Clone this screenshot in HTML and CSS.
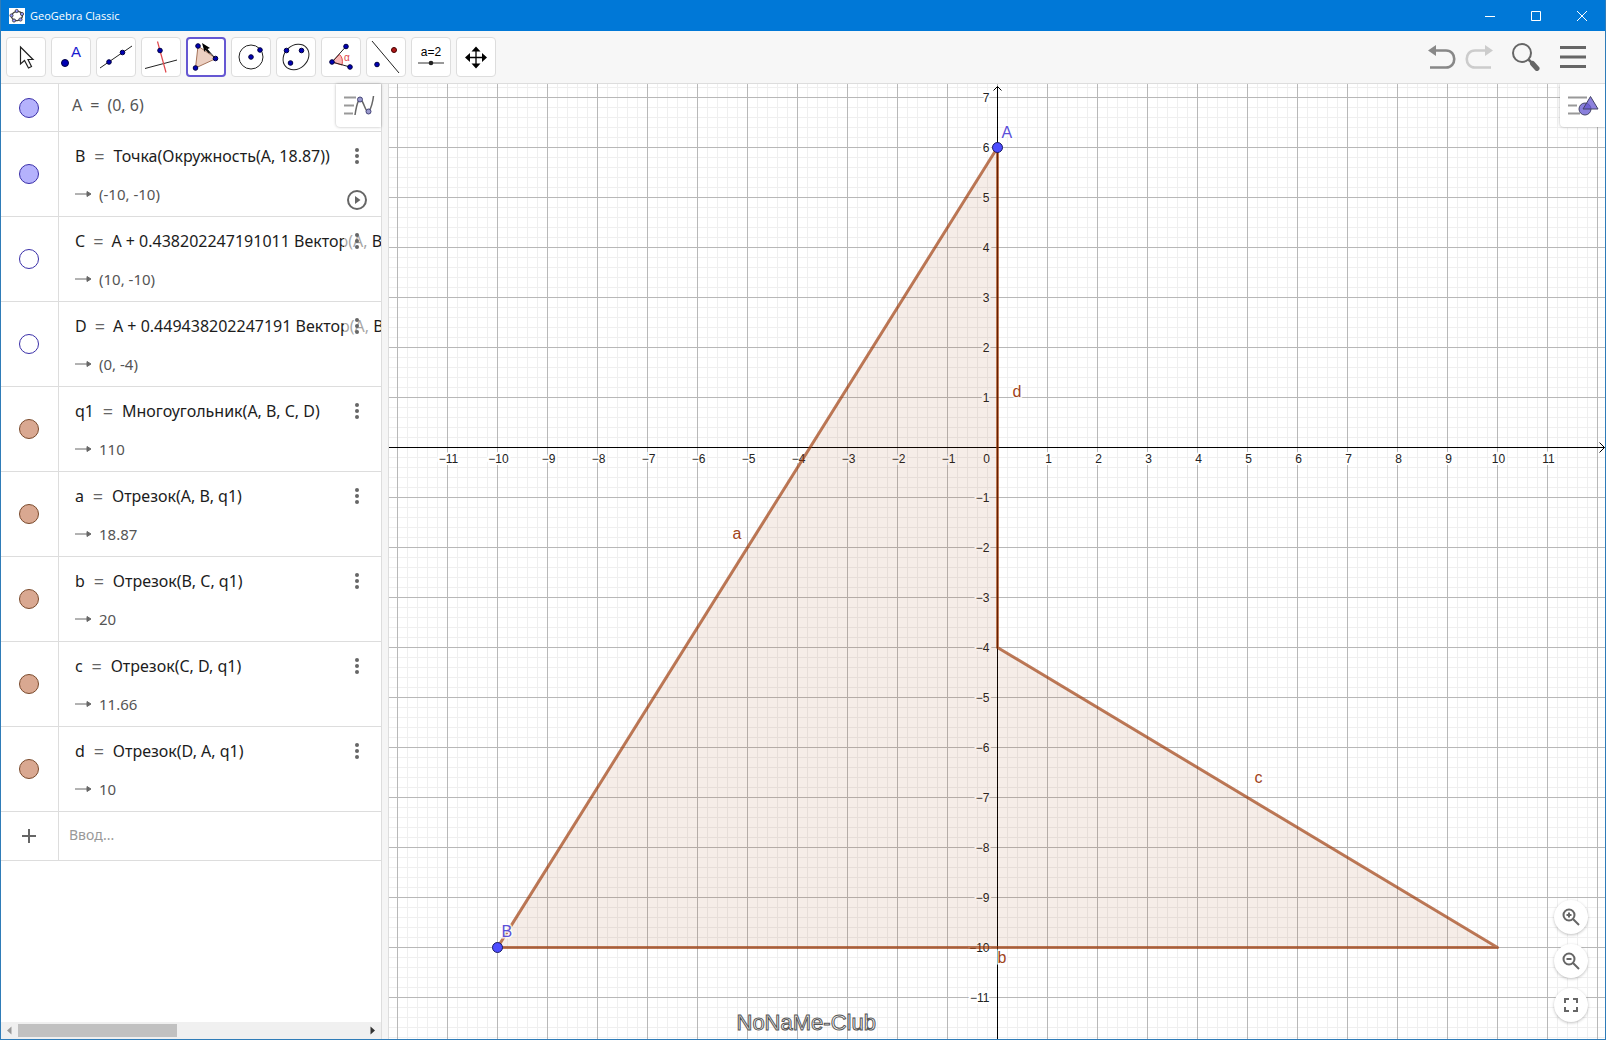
FILE: index.html
```html
<!DOCTYPE html>
<html lang="ru">
<head>
<meta charset="utf-8">
<title>GeoGebra Classic</title>
<link rel="stylesheet" href="styles.css">
</head>
<body>
<div class="window">
  <header class="titlebar">
    <svg class="logo" width="16" height="16" viewBox="0 0 16 16" aria-hidden="true"><rect width="16" height="16" fill="#fff"/><ellipse cx="8" cy="8" rx="5.5" ry="4.6" transform="rotate(-15 8 8)" fill="none" stroke="#444" stroke-width="1.3"/><g fill="#99f" stroke="#333" stroke-width=".8"><circle cx="7.700" cy="3" r="1.600"/><circle cx="13" cy="6" r="1.600"/><circle cx="11.500" cy="11.500" r="1.600"/><circle cx="5" cy="12.500" r="1.600"/><circle cx="2.500" cy="7.500" r="1.600"/></g></svg>
    <span class="title">GeoGebra Classic</span>
    <button class="winbtn" aria-label="Свернуть"><svg width="12" height="12" viewBox="0 0 12 12"><path d="M1 6.500H11"/></svg></button>
    <button class="winbtn" aria-label="Развернуть"><svg width="12" height="12" viewBox="0 0 12 12"><path d="M1.500 1.500H10.500V10.500H1.500Z"/></svg></button>
    <button class="winbtn" aria-label="Закрыть"><svg width="12" height="12" viewBox="0 0 12 12"><path d="M1 1L11 11M11 1L1 11"/></svg></button>
  </header>

  <nav class="toolbar">
    <button class="tool" aria-label="Перемещать"><svg viewBox="0 0 40 40"><path d="M14.500 10V27L18.500 23.500L22.500 31L25.500 29.500L22 22.500H27Z" fill="#fff" stroke="#222" stroke-width="1.200"/></svg></button>
    <button class="tool" aria-label="Точка"><svg viewBox="0 0 40 40"><circle class="pt" cx="14" cy="26" r="3.500"/><text x="20" y="20" class="toolA">A</text></svg></button>
    <button class="tool" aria-label="Прямая"><svg viewBox="0 0 40 40"><path d="M4 31L36 9" class="ln"/><circle class="pt" cx="13" cy="25" r="2.300"/><circle class="pt" cx="26.500" cy="15.500" r="2.300"/></svg></button>
    <button class="tool" aria-label="Перпендикуляр"><svg viewBox="0 0 40 40"><path d="M4 31.500L36 23" class="ln"/><path d="M16.500 4.500L25 35.500" stroke="#e0474c" fill="none" stroke-width="1.200"/><circle class="pt" cx="19" cy="13.500" r="2.300"/></svg></button>
    <button class="tool active" aria-label="Многоугольник"><svg viewBox="0 0 40 40"><path d="M12 9L30 21.500L9.500 31Z" fill="#ecd0c2" stroke="#a5735a"/><circle class="pt" cx="12" cy="9" r="2.300"/><circle class="pt" cx="29.500" cy="21.500" r="2.300"/><circle class="pt" cx="9.500" cy="31" r="2.300"/><path d="M16 6L24 11L21.500 12L25 17L22.500 16L19.500 13L18.500 15Z" fill="#000"/><path d="M20 11L29 21" stroke="#222"/></svg></button>
    <button class="tool" aria-label="Окружность"><svg viewBox="0 0 40 40"><circle cx="20" cy="20" r="12" class="ln"/><circle class="pt" cx="20" cy="20" r="2.300"/><circle class="pt" cx="29" cy="13" r="2.300"/></svg></button>
    <button class="tool" aria-label="Эллипс"><svg viewBox="0 0 40 40"><ellipse cx="20" cy="20" rx="14" ry="11.500" transform="rotate(-42 20 20)" class="ln"/><circle class="pt" cx="10.500" cy="13.500" r="2.300"/><circle class="pt" cx="25.500" cy="13.500" r="2.300"/><circle class="pt" cx="14.500" cy="26" r="2.300"/></svg></button>
    <button class="tool" aria-label="Угол"><svg viewBox="0 0 40 40"><path d="M11 25L18.500 17.500Q22.500 21 21 28Z" fill="#f9b9b9" stroke="#e0474c"/><path d="M25 9.500L11 25L29 30" class="ln"/><text x="23" y="24" class="alpha">α</text><circle class="pt" cx="25" cy="9.500" r="2.300"/><circle class="pt" cx="11" cy="25" r="2.300"/><circle class="pt" cx="29" cy="30" r="2.300"/></svg></button>
    <button class="tool" aria-label="Отражение"><svg viewBox="0 0 40 40"><path d="M6 4L33 36" class="ln"/><circle class="pt" cx="11" cy="27.500" r="2.300"/><circle cx="28" cy="13" r="2.500" fill="#b01818" stroke="#400"/></svg></button>
    <button class="tool" aria-label="Ползунок"><svg viewBox="0 0 40 40"><text x="20" y="19" class="slidertext">a=2</text><path d="M7 26H33" stroke="#777" stroke-width="1.500"/><circle cx="20" cy="26" r="2.300" fill="#222"/></svg></button>
    <button class="tool" aria-label="Переместить чертёж"><svg viewBox="0 0 40 40"><path d="M20 13V28M13 20.500H28" stroke="#000" stroke-width="1.300"/><path d="M20 9.500L24.500 14.500H15.500ZM20 31.500L24.500 26.500H15.500ZM9 20.500L14 16V25ZM31 20.500L26 16V25Z"/></svg></button>
    <div class="actions">
      <button class="action" aria-label="Отменить"><svg width="28" height="28" viewBox="0 0 28 28"><path d="M7 7.500H18C29 7.500 29 24.500 18 24.500H2" fill="none" stroke="#888" stroke-width="2.600"/><path d="M0 7.500L8 2V13Z" fill="#888"/></svg></button>
      <button class="action redo" aria-label="Повторить"><svg width="28" height="28" viewBox="0 0 28 28"><path d="M21 7.500H10C-1 7.500 -1 24.500 10 24.500H26" fill="none" stroke="#ccc" stroke-width="2.600"/><path d="M28 7.500L20 2V13Z" fill="#ccc"/></svg></button>
      <button class="action find" aria-label="Поиск"><svg width="28" height="28" viewBox="0 0 28 28"><circle cx="10" cy="10" r="9" fill="none" stroke="#666" stroke-width="2"/><path d="M16.500 16.500L20 20" stroke="#666" stroke-width="2.500"/><path d="M20.500 20.500L25 25.500" stroke="#666" stroke-width="5" stroke-linecap="round"/></svg></button>
      <button class="action menu" aria-label="Меню"><svg width="28" height="28" viewBox="0 0 28 28"><path d="M1 4.500H27M1 14H27M1 23.500H27" stroke="#666" stroke-width="3"/></svg></button>
    </div>
  </nav>

  <main class="workspace">
    <section class="algebra">
      <button class="stylebar" aria-label="Панель стилей"><svg width="32" height="24" viewBox="0 0 32 24"><path d="M1 3.500H13M1 11.500H11M1 19.500H10" stroke="#999" stroke-width="2"/><path d="M12 21C14 8 16 3 19 7C22 12 23 19 26 17C28 15 30 7 30.500 2" fill="none" stroke="#666" stroke-width="1.500"/><g fill="#99c" stroke="#447" stroke-width="1"><circle cx="17" cy="5.500" r="2.500"/><circle cx="25.500" cy="17.500" r="2.500"/></g></svg></button>
      <ul class="rows">
        <li class="row first"><div class="marker"><button class="dot blue" aria-label="A"></button></div><div class="body"><div class="formula plain"><span>A</span><span>=</span><span>(0, 6)</span></div></div></li>
        <li class="row"><div class="marker"><button class="dot blue" aria-label="B"></button></div><div class="body"><div class="formula"><span>B</span><i>=</i><span>Точка(Окружность(A, 18.87))</span></div><div class="value"><svg class="arrow" viewBox="0 0 16 8"><path d="M0 4H14" /><path d="M12 1.500L16 4L12 6.500Z"/></svg><span>(-10, -10)</span></div></div><button class="more" aria-label="Ещё"><svg width="4" height="18" viewBox="0 0 4 18"><circle cx="2" cy="3" r="2"/><circle cx="2" cy="9" r="2"/><circle cx="2" cy="15" r="2"/></svg></button><button class="play" aria-label="Анимация"><svg width="22" height="22" viewBox="0 0 22 22"><circle cx="11" cy="11" r="9" fill="none" stroke="#666" stroke-width="2"/><path d="M9 7L14.500 11L9 15Z" fill="#666"/></svg></button></li>
        <li class="row"><div class="marker"><button class="dot hollow" aria-label="C"></button></div><div class="body"><div class="formula"><span>C</span><i>=</i><span>A + 0.438202247191011 Вектор(A, B)</span></div><div class="value"><svg class="arrow" viewBox="0 0 16 8"><path d="M0 4H14"/><path d="M12 1.500L16 4L12 6.500Z"/></svg><span>(10, -10)</span></div></div><button class="more" aria-label="Ещё"><svg width="4" height="18" viewBox="0 0 4 18"><circle cx="2" cy="3" r="2"/><circle cx="2" cy="9" r="2"/><circle cx="2" cy="15" r="2"/></svg></button></li>
        <li class="row"><div class="marker"><button class="dot hollow" aria-label="D"></button></div><div class="body"><div class="formula"><span>D</span><i>=</i><span>A + 0.449438202247191 Вектор(A, B)</span></div><div class="value"><svg class="arrow" viewBox="0 0 16 8"><path d="M0 4H14"/><path d="M12 1.500L16 4L12 6.500Z"/></svg><span>(0, -4)</span></div></div><button class="more" aria-label="Ещё"><svg width="4" height="18" viewBox="0 0 4 18"><circle cx="2" cy="3" r="2"/><circle cx="2" cy="9" r="2"/><circle cx="2" cy="15" r="2"/></svg></button></li>
        <li class="row"><div class="marker"><button class="dot brown" aria-label="q1"></button></div><div class="body"><div class="formula"><span>q1</span><i>=</i><span>Многоугольник(A, B, C, D)</span></div><div class="value"><svg class="arrow" viewBox="0 0 16 8"><path d="M0 4H14"/><path d="M12 1.500L16 4L12 6.500Z"/></svg><span>110</span></div></div><button class="more" aria-label="Ещё"><svg width="4" height="18" viewBox="0 0 4 18"><circle cx="2" cy="3" r="2"/><circle cx="2" cy="9" r="2"/><circle cx="2" cy="15" r="2"/></svg></button></li>
        <li class="row"><div class="marker"><button class="dot brown" aria-label="a"></button></div><div class="body"><div class="formula"><span>a</span><i>=</i><span>Отрезок(A, B, q1)</span></div><div class="value"><svg class="arrow" viewBox="0 0 16 8"><path d="M0 4H14"/><path d="M12 1.500L16 4L12 6.500Z"/></svg><span>18.87</span></div></div><button class="more" aria-label="Ещё"><svg width="4" height="18" viewBox="0 0 4 18"><circle cx="2" cy="3" r="2"/><circle cx="2" cy="9" r="2"/><circle cx="2" cy="15" r="2"/></svg></button></li>
        <li class="row"><div class="marker"><button class="dot brown" aria-label="b"></button></div><div class="body"><div class="formula"><span>b</span><i>=</i><span>Отрезок(B, C, q1)</span></div><div class="value"><svg class="arrow" viewBox="0 0 16 8"><path d="M0 4H14"/><path d="M12 1.500L16 4L12 6.500Z"/></svg><span>20</span></div></div><button class="more" aria-label="Ещё"><svg width="4" height="18" viewBox="0 0 4 18"><circle cx="2" cy="3" r="2"/><circle cx="2" cy="9" r="2"/><circle cx="2" cy="15" r="2"/></svg></button></li>
        <li class="row"><div class="marker"><button class="dot brown" aria-label="c"></button></div><div class="body"><div class="formula"><span>c</span><i>=</i><span>Отрезок(C, D, q1)</span></div><div class="value"><svg class="arrow" viewBox="0 0 16 8"><path d="M0 4H14"/><path d="M12 1.500L16 4L12 6.500Z"/></svg><span>11.66</span></div></div><button class="more" aria-label="Ещё"><svg width="4" height="18" viewBox="0 0 4 18"><circle cx="2" cy="3" r="2"/><circle cx="2" cy="9" r="2"/><circle cx="2" cy="15" r="2"/></svg></button></li>
        <li class="row"><div class="marker"><button class="dot brown" aria-label="d"></button></div><div class="body"><div class="formula"><span>d</span><i>=</i><span>Отрезок(D, A, q1)</span></div><div class="value"><svg class="arrow" viewBox="0 0 16 8"><path d="M0 4H14"/><path d="M12 1.500L16 4L12 6.500Z"/></svg><span>10</span></div></div><button class="more" aria-label="Ещё"><svg width="4" height="18" viewBox="0 0 4 18"><circle cx="2" cy="3" r="2"/><circle cx="2" cy="9" r="2"/><circle cx="2" cy="15" r="2"/></svg></button></li>
        <li class="row entry"><div class="marker"><button class="plus" aria-label="Добавить"><svg width="14" height="14" viewBox="0 0 14 14"><path d="M7 0V14M0 7H14" stroke="#666" stroke-width="2"/></svg></button></div><input class="entryfield" type="text" placeholder="Ввод..." aria-label="Ввод"></li>
      </ul>
      <div class="scrollbar"><svg width="17" height="17" viewBox="0 0 17 17"><path d="M6 8.500L10.500 4.500V12.500Z" fill="#999"/></svg><div class="track"><div class="thumb"></div></div><svg width="17" height="17" viewBox="0 0 17 17"><path d="M11 8.500L6.500 4.500V12.500Z" fill="#333"/></svg></div>
    </section>
    <div class="divider"></div>
    <section class="graphics">
      <svg class="plot" viewBox="-608.5 -363.5 1216 955" preserveAspectRatio="xMidYMin slice" role="img" aria-label="Полотно">
        <defs>
          <pattern id="minor" x="-0.5" y="-0.5" width="10" height="10" patternUnits="userSpaceOnUse"><path d="M.5 0V10M0 .5H10" stroke="#efefef" fill="none"/></pattern>
          <pattern id="major" x="-0.5" y="-0.5" width="50" height="50" patternUnits="userSpaceOnUse"><path d="M.5 0V50M0 .5H50" stroke="#b8b8b8" fill="none"/></pattern>
        </defs>
        <rect x="-609" y="-364" width="1218" height="957" fill="url(#minor)"/>
        <rect x="-609" y="-364" width="1218" height="957" fill="url(#major)"/>
        <path class="axis" d="M-609 0H607M602 -5L607 0L602 5M0 593V-361M-4 -357L0 -361L4 -357"/>
        <g class="num xnum">
          <text x="-549" y="15">−11</text><text x="-499" y="15">−10</text><text x="-449" y="15">−9</text><text x="-399" y="15">−8</text><text x="-349" y="15">−7</text><text x="-299" y="15">−6</text><text x="-249" y="15">−5</text><text x="-199" y="15">−4</text><text x="-149" y="15">−3</text><text x="-99" y="15">−2</text><text x="-49" y="15">−1</text><text x="-11" y="15">0</text><text x="51" y="15">1</text><text x="101" y="15">2</text><text x="151" y="15">3</text><text x="201" y="15">4</text><text x="251" y="15">5</text><text x="301" y="15">6</text><text x="351" y="15">7</text><text x="401" y="15">8</text><text x="451" y="15">9</text><text x="501" y="15">10</text><text x="551" y="15">11</text>
        </g>
        <g class="num ynum">
          <text x="-8" y="-346">7</text><text x="-8" y="-296">6</text><text x="-8" y="-246">5</text><text x="-8" y="-196">4</text><text x="-8" y="-146">3</text><text x="-8" y="-96">2</text><text x="-8" y="-46">1</text><text x="-8" y="54">−1</text><text x="-8" y="104">−2</text><text x="-8" y="154">−3</text><text x="-8" y="204">−4</text><text x="-8" y="254">−5</text><text x="-8" y="304">−6</text><text x="-8" y="354">−7</text><text x="-8" y="404">−8</text><text x="-8" y="454">−9</text><text x="-8" y="504">−10</text><text x="-8" y="554">−11</text>
        </g>
        <path class="poly" d="M0 -300L-500 500H500L0 200Z"/>
        <circle class="vertex" cx="0" cy="-300" r="5"/>
        <circle class="vertex" cx="-500" cy="500" r="5"/>
        <g class="name point"><text x="4" y="-310">A</text><text x="-496" y="489">B</text></g>
        <g class="name side"><text x="-265" y="91">a</text><text x="0" y="515">b</text><text x="257" y="335">c</text><text x="15" y="-51">d</text></g>
        <text class="watermark" x="-261" y="582">NoNaMe-Club</text>
      </svg>
      <button class="stylebar" aria-label="Стиль полотна"><svg width="32" height="24" viewBox="0 0 32 24"><path d="M1 3.500H20M1 11.500H10M1 19.500H13" stroke="#999" stroke-width="2"/><circle cx="18" cy="15" r="6" fill="#8a80dc" stroke="#446"/><path d="M23.500 2.500L31 15H16Z" fill="#6557d2" fill-opacity=".75" stroke="#446"/></svg></button>
      <div class="zoomer">
        <button class="round" aria-label="Увеличить"><svg width="20" height="20" viewBox="0 0 20 20"><circle cx="8" cy="8" r="5.500"/><path d="M12 12L18 18M8 5.500V10.500M5.500 8H10.500"/></svg></button>
        <button class="round" aria-label="Уменьшить"><svg width="20" height="20" viewBox="0 0 20 20"><circle cx="8" cy="8" r="5.500"/><path d="M12 12L18 18M5.500 8H10.500"/></svg></button>
        <button class="round" aria-label="Во весь экран"><svg width="20" height="20" viewBox="0 0 20 20"><path d="M4 8V4H8M12 4H16V8M16 12V16H12M8 16H4V12"/></svg></button>
      </div>
    </section>
  </main>
</div>
</body>
</html>
```
FILE: styles.css
```css
* { box-sizing: border-box; }
body { margin: 0; font-family: "Noto Sans", "Open Sans", sans-serif; }
button { margin: 0; padding: 0; border: 0; background: none; font: inherit; }
svg { display: block; }

.window { display: flex; flex-direction: column; height: 100vh; border: 1px solid #2f7cb8; border-top: 0; background: #fff; overflow: hidden; }

.titlebar { display: flex; flex: none; align-items: center; height: 31px; padding-left: 8px; background: #0078d7; color: #fff; font-size: 11px; }
.title { flex: 1; padding-left: 5px; font-family: "Open Sans", sans-serif; }
.winbtn { display: flex; align-items: center; justify-content: center; width: 46px; height: 31px; }
.winbtn path { fill: none; stroke: #fff; }

.toolbar { display: flex; flex: none; align-items: center; gap: 5px; height: 53px; padding: 0 5px; background: #f7f7f7; border-bottom: 1px solid #ddd; }
.tool { width: 40px; height: 40px; border: 1px solid #ddd; border-radius: 4px; background: #fff; }
.tool svg { width: 40px; height: 40px; margin: -1px; }
.tool.active { border: 2px solid #6557d2; }
.tool.active svg { margin: -2px; }
.pt { fill: #0000b4; stroke: #000040; }
.ln { fill: none; stroke: #222; stroke-width: 1; }
.toolA { font: 15px "Liberation Sans", sans-serif; fill: #1a1ad0; }
.alpha { font: 10px "Liberation Sans", sans-serif; fill: #e0474c; }
.slidertext { font: 12px "Liberation Sans", sans-serif; text-anchor: middle; }
.actions { display: flex; gap: 9px; margin-left: auto; padding-right: 13px; }
.find, .menu { margin-left: 10px; }

.workspace { display: flex; flex: 1; min-height: 0; }
.algebra { position: relative; display: flex; flex-direction: column; flex: none; width: 380px; }
.rows { flex: 1; margin: 0; padding: 0; list-style: none; overflow: hidden; }
.row { position: relative; display: flex; height: 85px; border-bottom: 1px solid #ddd; overflow: hidden; }
.row.first { height: 48px; }
.marker { display: flex; flex: none; align-items: center; justify-content: center; width: 58px; padding-right: 2px; border-right: 1px solid #ddd; }
.dot { width: 20px; height: 20px; border: 1px solid; border-radius: 50%; }
.blue { background: #b5b2fc; border-color: #3a2fa8; }
.hollow { background: #fff; border-color: #3a2fa8; }
.brown { background: #d9a891; border-color: #7a4a2c; }
.body { flex: 1; min-width: 0; padding: 5px 0 0 16px; }
.first .body { padding: 2px 0 0 13px; }
.formula { display: flex; align-items: center; gap: 8px; height: 38px; font-size: 16px; color: #1c1c1c; white-space: nowrap; }
.formula i { width: 12px; font-style: normal; font-size: 18px; color: #666; text-align: center; }
.formula.plain { color: #555; }
.value { display: flex; align-items: center; gap: 8px; height: 38px; font-size: 15px; color: #555; }
.arrow { width: 16px; height: 8px; fill: #666; stroke: #666; }
.more { position: absolute; right: 11px; top: 10px; display: flex; align-items: center; justify-content: center; width: 26px; height: 28px; background: rgba(255, 255, 255, .6); fill: #666; }
.play { position: absolute; right: 13px; bottom: 5px; }
.row.entry { height: 49px; }
.entryfield { flex: 1; min-width: 0; padding: 0 10px 4px; border: 0; outline: 0; background: none; font: 14px "Noto Sans", sans-serif; }
.entryfield::placeholder { color: #999; opacity: 1; }
.scrollbar { display: flex; flex: none; height: 17px; background: #f0f0f0; }
.track { flex: 1; padding: 2px 0; }
.thumb { width: 46%; height: 13px; background: #c1c1c1; }
.divider { flex: none; width: 8px; background: #f5f5f5; border: 1px solid #ddd; border-width: 0 1px; }

.graphics { position: relative; flex: 1; min-width: 0; overflow: hidden; }
.plot { width: 100%; height: 100%; }
.axis { fill: none; stroke: #000; }
.num { font: 12px "Liberation Sans", sans-serif; fill: #222; stroke: #fff; stroke-width: 4px; paint-order: stroke; }
.xnum { text-anchor: middle; }
.ynum { text-anchor: end; }
.poly { fill: #993300; fill-opacity: .09; stroke: #993300; stroke-opacity: .65; stroke-width: 3; stroke-linejoin: round; }
.vertex { fill: #4d4dff; stroke: #191966; }
.name { font: 16px "Liberation Sans", sans-serif; stroke: #fff; stroke-opacity: .8; stroke-width: 3px; paint-order: stroke; }
.point { fill: #5b50d8; }
.side { fill: #a0431a; }
.watermark { font: 22px "Liberation Sans", sans-serif; fill: #fff; stroke: #555; stroke-width: 1px; }

.stylebar { position: absolute; z-index: 1; top: 0; right: 0; display: flex; align-items: center; justify-content: center; width: 45px; height: 43px; border-radius: 0 0 0 4px; background: #fff; box-shadow: 0 0 3px rgba(0, 0, 0, .3); }
.zoomer { position: absolute; right: 17px; bottom: 17px; display: flex; flex-direction: column; gap: 10px; }
.round { display: flex; align-items: center; justify-content: center; width: 34px; height: 34px; border-radius: 50%; background: #fff; box-shadow: 0 1px 3px rgba(0, 0, 0, .25); }
.round svg { fill: none; stroke: #666; stroke-width: 2; }
```
